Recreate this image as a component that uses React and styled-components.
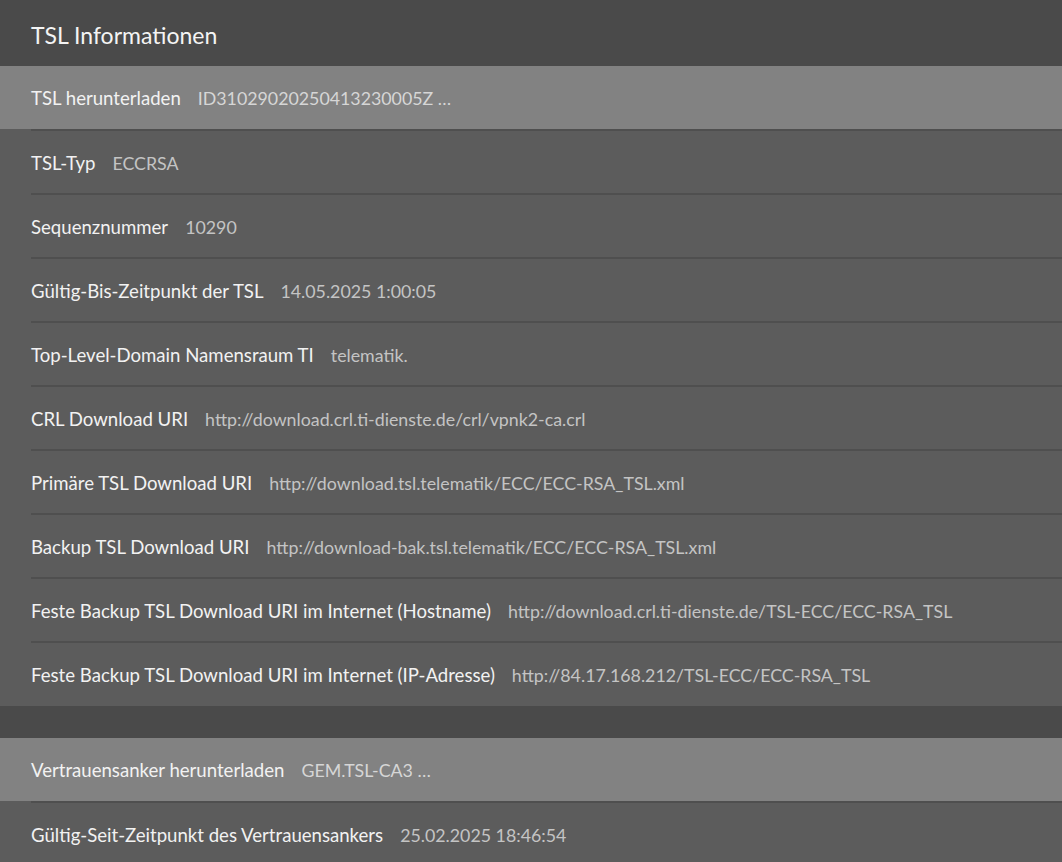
import styled, { createGlobalStyle } from 'styled-components';

const GlobalStyle = createGlobalStyle`
  html, body {
    margin: 0;
    padding: 0;
    background: #4a4a4a;
  }
  body {
    font-family: 'Lato', 'Noto Sans', sans-serif;
  }
`;

const Page = styled.div`
  width: 1062px;
  height: 862px;
  overflow: hidden;
  background: #4a4a4a;
`;

const Header = styled.div`
  height: 66px;
  display: flex;
  align-items: center;
  padding: 3px 0 0 31px;
  color: #f4f4f4;
  font-size: 23px;
  font-weight: 400;
  box-sizing: border-box;
`;

const Section = styled.div`
  display: flex;
  flex-direction: column;
  margin-bottom: ${(p) => (p.$gap ? '32px' : '0')};
`;

const Row = styled.div`
  position: relative;
  box-sizing: border-box;
  height: ${(p) => (p.$last || p.$active ? '63px' : '62px')};
  display: flex;
  align-items: center;
  gap: 17px;
  padding: 1px 0 0 31px;
  background: ${(p) => (p.$active ? '#828282' : '#5c5c5c')};
  font-size: 18.6px;
  white-space: nowrap;
  ${(p) =>
    !p.$last &&
    `
    margin-bottom: 2px;
    &::after {
      content: '';
      position: absolute;
      left: 31px;
      right: 0;
      bottom: -2px;
      height: 2px;
      background: #4f4f4f;
    }
    &::before {
      content: '';
      position: absolute;
      left: 0;
      width: 31px;
      bottom: -2px;
      height: 2px;
      background: #5c5c5c;
    }
  `}
`;

const Label = styled.span`
  color: #f2f2f2;
`;

const Value = styled.span`
  font-size: 17.8px;
  color: ${(p) => (p.$active ? '#d6d6d6' : '#c4c4c4')};
`;

const tslRows = [
  ['TSL herunterladen', 'ID31029020250413230005Z …', true],
  ['TSL-Typ', 'ECCRSA'],
  ['Sequenznummer', '10290'],
  ['Gültig-Bis-Zeitpunkt der TSL', '14.05.2025 1:00:05'],
  ['Top-Level-Domain Namensraum TI', 'telematik.'],
  ['CRL Download URI', 'http://download.crl.ti-dienste.de/crl/vpnk2-ca.crl'],
  ['Primäre TSL Download URI', 'http://download.tsl.telematik/ECC/ECC-RSA_TSL.xml'],
  ['Backup TSL Download URI', 'http://download-bak.tsl.telematik/ECC/ECC-RSA_TSL.xml'],
  ['Feste Backup TSL Download URI im Internet (Hostname)', 'http://download.crl.ti-dienste.de/TSL-ECC/ECC-RSA_TSL'],
  ['Feste Backup TSL Download URI im Internet (IP-Adresse)', 'http://84.17.168.212/TSL-ECC/ECC-RSA_TSL'],
];

const anchorRows = [
  ['Vertrauensanker herunterladen', 'GEM.TSL-CA3 …', true],
  ['Gültig-Seit-Zeitpunkt des Vertrauensankers', '25.02.2025 18:46:54'],
];

function InfoRow({ label, value, active, last }) {
  return (
    <Row $active={active} $last={last}>
      <Label>{label}</Label>
      <Value $active={active}>{value}</Value>
    </Row>
  );
}

export default function App() {
  return (
    <Page>
      <GlobalStyle />
      <Header>TSL Informationen</Header>
      <Section $gap>
        {tslRows.map(([l, v, a], i) => (
          <InfoRow key={l} label={l} value={v} active={a} last={i === tslRows.length - 1} />
        ))}
      </Section>
      <Section>
        {anchorRows.map(([l, v, a]) => (
          <InfoRow key={l} label={l} value={v} active={a} />
        ))}
      </Section>
    </Page>
  );
}
